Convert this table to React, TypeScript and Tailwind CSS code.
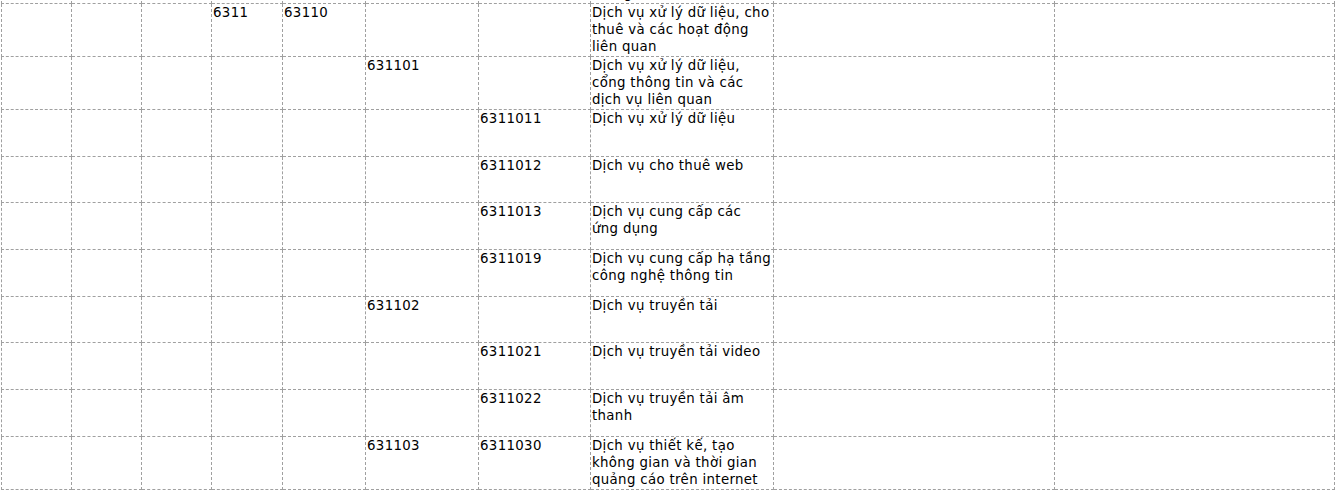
import React from "react";

const rows: string[][] = [
  ["", "", "", "6311", "63110", "", "", "Dịch vụ xử lý dữ liệu, cho thuê và các hoạt động liên quan", "", ""],
  ["", "", "", "", "", "631101", "", "Dịch vụ xử lý dữ liệu, cổng thông tin và các dịch vụ liên quan", "", ""],
  ["", "", "", "", "", "", "6311011", "Dịch vụ xử lý dữ liệu", "", ""],
  ["", "", "", "", "", "", "6311012", "Dịch vụ cho thuê web", "", ""],
  ["", "", "", "", "", "", "6311013", "Dịch vụ cung cấp các ứng dụng", "", ""],
  ["", "", "", "", "", "", "6311019", "Dịch vụ cung cấp hạ tầng công nghệ thông tin", "", ""],
  ["", "", "", "", "", "631102", "", "Dịch vụ truyền tải", "", ""],
  ["", "", "", "", "", "", "6311021", "Dịch vụ truyền tải video", "", ""],
  ["", "", "", "", "", "", "6311022", "Dịch vụ truyền tải âm thanh", "", ""],
  ["", "", "", "", "", "631103", "6311030", "Dịch vụ thiết kế, tạo không gian và thời gian quảng cáo trên internet", "", ""],
];

const widths = [70, 70, 70, 71, 83, 113, 112, 183, 281, 280];

const cell =
  "border border-dashed border-[#a0a0a0] align-top pl-[1px] pr-[1px] pt-0 pb-[1px]";

export default function App() {
  return (
    <div className="w-[1338px] h-[491px] overflow-hidden bg-white text-black font-['DejaVu_Sans',Verdana,sans-serif] text-[13.33px] leading-[17px] tracking-[0.34px]">
      <div className="-mt-[67px] pl-[1px]">
        <table className="table-fixed border-collapse w-[1334px]">
          <colgroup>
            {widths.map((w, i) => (
              <col key={i} style={{ width: w }} />
            ))}
          </colgroup>
          <tbody>
            <tr className="h-[53px]">
              {Array.from({ length: 10 }).map((_, i) => (
                <td key={i} className={cell}>
                  {i === 7 ? "Dịch vụ xử lý dữ liệu, cho thuê và các hoạt động liên quan; dịch vụ cổng thông tin" : null}
                </td>
              ))}
            </tr>
            {rows.map((r, ri) => (
              <tr key={ri} className="h-[46.67px]">
                {r.map((t, ci) => (
                  <td key={ci} className={cell}>
                    {t}
                  </td>
                ))}
              </tr>
            ))}
          </tbody>
        </table>
      </div>
    </div>
  );
}
